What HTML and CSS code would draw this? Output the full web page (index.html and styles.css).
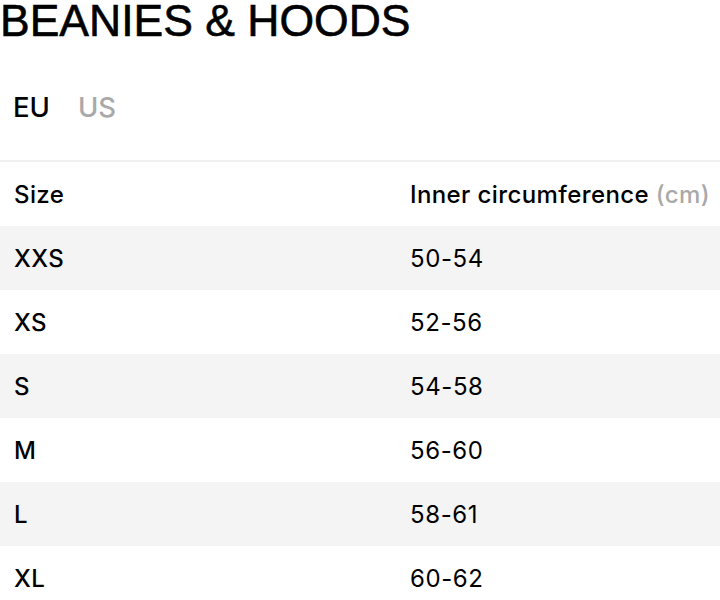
FILE: index.html
```html
<!DOCTYPE html>
<html>
<head>
<meta charset="utf-8">
<link rel="stylesheet" href="styles.css">
</head>
<body>
<div class="page">
  <h1 class="title">BEANIES &amp; HOODS</h1>
  <div class="units">
    <span class="unit active">EU</span>
    <span class="unit">US</span>
  </div>
  <table class="sizes">
    <thead>
      <tr><th class="c1">Size</th><th class="c2">Inner circumference <span class="muted">(cm)</span></th></tr>
    </thead>
    <tbody>
      <tr class="alt"><td>XXS</td><td class="num">50-54</td></tr>
      <tr><td>XS</td><td class="num">52-56</td></tr>
      <tr class="alt"><td>S</td><td class="num">54-58</td></tr>
      <tr><td>M</td><td class="num">56-60</td></tr>
      <tr class="alt"><td>L</td><td class="num">58-61</td></tr>
      <tr><td>XL</td><td class="num">60-62</td></tr>
    </tbody>
  </table>
</div>
</body>
</html>
```
FILE: styles.css
```css
html, body { margin: 0; padding: 0; background: #fff; }
body { font-family: Inter, Roboto, "Liberation Sans", sans-serif; color: #000; overflow: hidden; }
.page { width: 720px; }
.title {
  margin: 0;
  font-family: "Liberation Sans", Arial, sans-serif;
  font-weight: 400;
  font-size: 44.5px;
  line-height: 41px;
  letter-spacing: 0;
  -webkit-text-stroke: 0.6px #000;
  padding-top: 0;
}
.units { display: flex; gap: 28px; padding: 51px 0 0 13px; height: 68px; font-size: 27.5px; line-height: 30px; }
.unit { color: #a9a9a9; font-weight: 500; }
.unit.active { color: #000; font-weight: 500; }
.sizes { width: 720px; border-collapse: collapse; border-top: 2px solid #f0f0f0; }
.sizes th, .sizes td { text-align: left; font-weight: 500; font-size: 24px; letter-spacing: 0.4px; padding: 0 0 0 14px; height: 64px; }
.sizes .c1 { width: 382px; }
.sizes .num { font-weight: 400; letter-spacing: 0.6px; }
.sizes tr.alt { background: #f4f4f4; }
.muted { color: #a9a9a9; }
```
